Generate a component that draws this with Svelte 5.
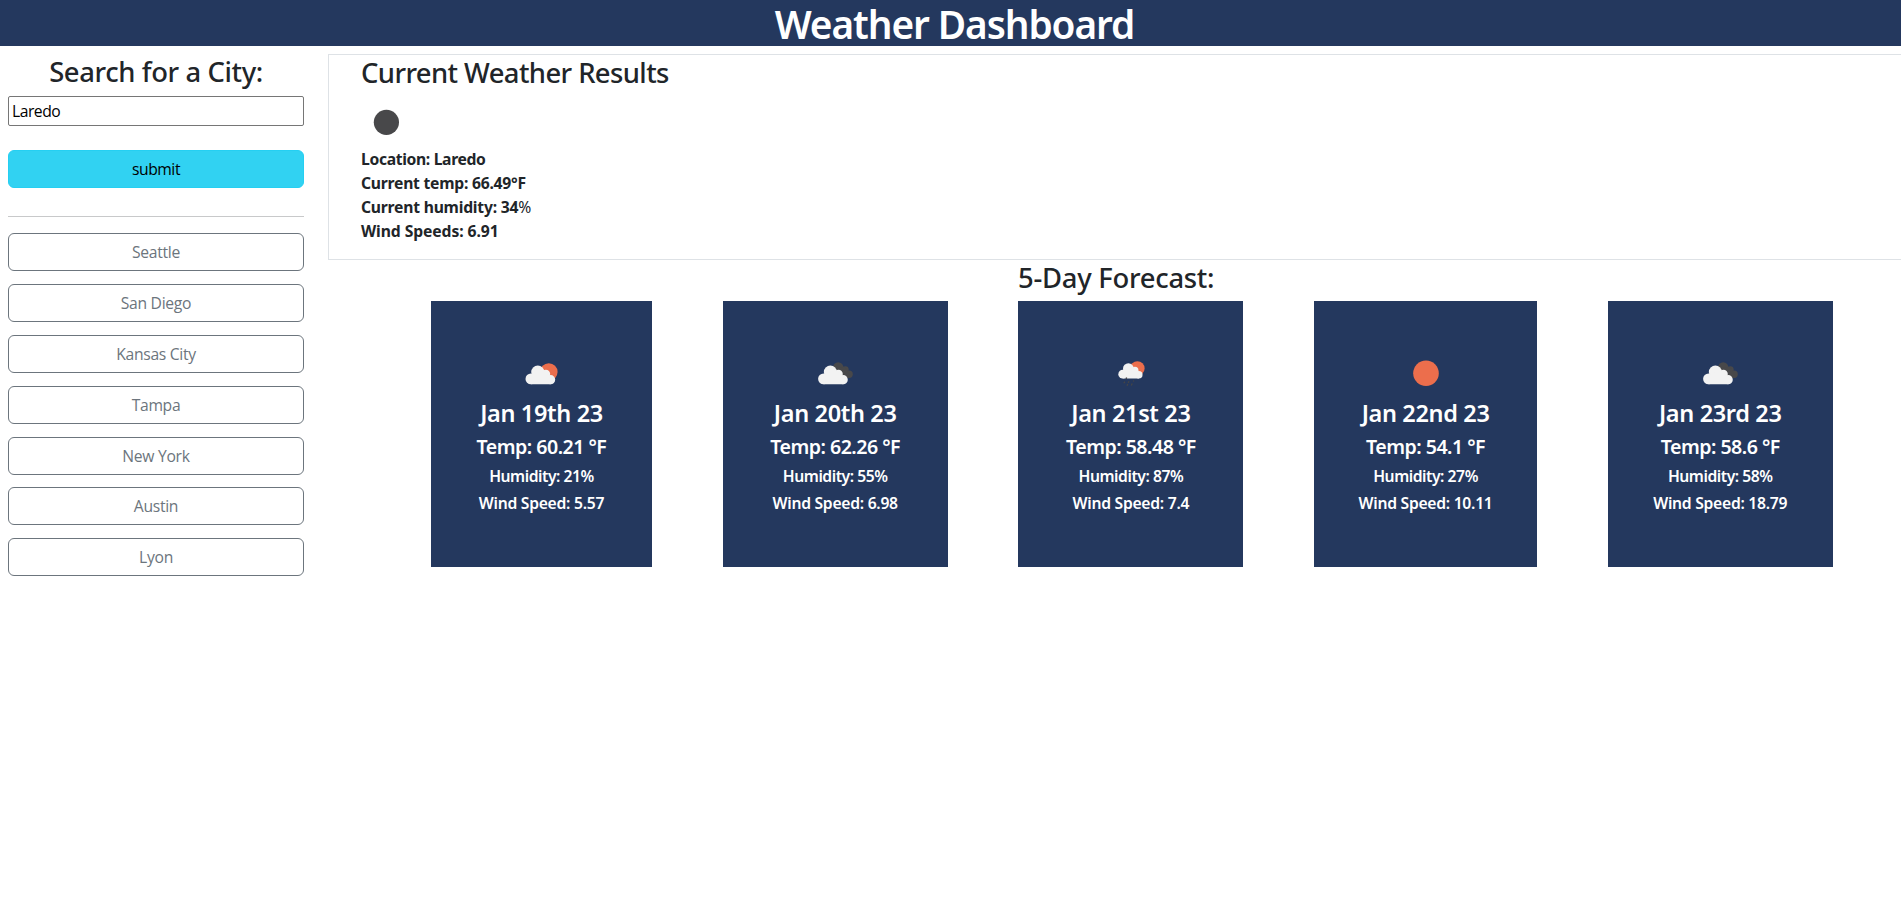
<script>
  let city = $state('Laredo');
  const history = ['Seattle', 'San Diego', 'Kansas City', 'Tampa', 'New York', 'Austin', 'Lyon'];
  const forecast = [
    { icon: 'partly', date: 'Jan 19th 23', temp: '60.21', humidity: 21, wind: '5.57' },
    { icon: 'clouds', date: 'Jan 20th 23', temp: '62.26', humidity: 55, wind: '6.98' },
    { icon: 'rain', date: 'Jan 21st 23', temp: '58.48', humidity: 87, wind: '7.4' },
    { icon: 'clear', date: 'Jan 22nd 23', temp: '54.1', humidity: 27, wind: '10.11' },
    { icon: 'clouds', date: 'Jan 23rd 23', temp: '58.6', humidity: 58, wind: '18.79' }
  ];
</script>

{#snippet cloud()}
  <g fill="#f2f2f2">
    <circle cx="13.9" cy="30.9" r="5.4" />
    <circle cx="20.8" cy="24.1" r="6.6" />
    <circle cx="28.9" cy="26.1" r="4.3" />
    <circle cx="33.6" cy="31.7" r="4.6" />
    <path d="M13.9 36.3V27l7-3 8 2 4.9 3v7.3z" />
  </g>
{/snippet}

{#snippet weather(kind)}
  <svg class="icon" viewBox="0 0 50 50" aria-hidden="true">
    {#if kind === 'night'}
      <circle cx="25.4" cy="25.3" r="12.6" fill="#48484a" />
    {:else if kind === 'clear'}
      <circle cx="25" cy="25.3" r="12.8" fill="#ec6e4c" />
    {:else if kind === 'partly'}
      <circle cx="31.8" cy="24" r="8.8" fill="#ec6e4c" />
      {@render cloud()}
    {:else if kind === 'clouds'}
      <g fill="#48484a">
        <circle cx="28.2" cy="19.4" r="5.2" />
        <circle cx="35.3" cy="21.7" r="3.4" />
        <circle cx="39.1" cy="26.3" r="3.7" />
        <path d="M26 20l9.3-1 3.8 7.3-1 3.6-6 .4z" />
      </g>
      <g transform="translate(-.4 0)">{@render cloud()}</g>
    {:else}
      <circle cx="31.4" cy="20.4" r="7.2" fill="#ec6e4c" />
      <g transform="translate(5.4 1) scale(.815)">{@render cloud()}</g>
      <path stroke="#454547" stroke-width="1.3" fill="none" d="M20.6 29.5l-.5 1.5M18.8 33.6l-.9 1.7M23 33.2l-.8 1.7M27.8 32.4l-.5 1.2M21.8 36l-.8 1.7M26.2 35.4l-.9 2" />
    {/if}
  </svg>
{/snippet}

<header><h1>Weather Dashboard</h1></header>
<div class="layout">
  <aside>
    <h2 class="search">Search for a City:</h2>
    <input type="text" bind:value={city} />
    <button class="submit">submit</button>
    <hr />
    <div class="history">
      {#each history as name}<button class="past">{name}</button>{/each}
    </div>
  </aside>
  <main>
    <section class="current">
      <h2 class="results">Current Weather Results</h2>
      {@render weather('night')}
      <p class="loc">Location: Laredo</p>
      <p>Current temp: 66.49°F</p>
      <p class="hum">Current humidity: 34<span>%</span></p>
      <p class="ws">Wind Speeds: 6.91</p>
    </section>
    <section class="forecast">
      <h2 class="five">5-Day Forecast:</h2>
      <div class="cards">
        {#each forecast as day}
          <article>
            {@render weather(day.icon)}
            <h4>{day.date}</h4>
            <h5>Temp: {day.temp} °F</h5>
            <h6>Humidity: {day.humidity}%</h6>
            <h6 class="wind">Wind Speed: {day.wind}</h6>
          </article>
        {/each}
      </div>
    </section>
  </main>
</div>

<style>
  :global(body) { margin: 0; background: #fff; overflow: hidden; }
  :global(*) { box-sizing: border-box; }
  h1, h2, h4, h5, h6, p { margin: 0; white-space: nowrap; }
  h1, h2, h4, h5, h6 { font-family: "Noto Sans", sans-serif; font-weight: 600; }
  header { height: 46px; padding-left: 8px; background: #24385e; color: #fff; text-align: center; }
  h1 { font-size: 38.8px; line-height: 48px; letter-spacing: -1.08px; }
  .layout { display: flex; color: #212529; font-family: "Open Sans", sans-serif; font-size: 15.7px; }
  aside { width: 312px; flex: none; padding: 8px; display: flex; flex-direction: column; }
  h2 { font-size: 27.4px; line-height: 36px; font-weight: 500; }
  .search { text-align: center; letter-spacing: -.38px; height: 34px; margin-bottom: 8px; }
  input { height: 30px; border: 1px solid #767676; border-radius: 2px; padding: 1px 3px; font: inherit; letter-spacing: -.5px; color: #000; background: #fff; outline: 0; }
  button { height: 38px; width: 100%; flex: none; padding: 0; border-radius: 6px; font: inherit; line-height: 36px; letter-spacing: -.3px; }
  .submit { margin-top: 24px; background: #31d2f2; border: 1px solid #25cff2; color: #000; letter-spacing: -.45px; }
  hr { width: 100%; height: 1px; flex: none; border: 0; margin: 28px 0 16.4px; background: #c8c9ca; }
  .history { display: flex; flex-direction: column; gap: 12.8px; }
  .past { background: #fff; border: 1px solid #6c757d; color: #6c757d; }
  main { flex: 1; min-width: 0; padding: 8px 0 0 16px; }
  .current { height: 206px; border: 1px solid #dee2e6; border-right: 0; padding-left: 32px; font-family: "Noto Sans", sans-serif; font-weight: 700; }
  .results { letter-spacing: -.58px; height: 41.5px; }
  .icon { display: block; width: 50px; height: 50px; flex: none; }
  p { line-height: 24px; letter-spacing: -.24px; }
  .loc { letter-spacing: -.34px; }
  .hum { letter-spacing: -.22px; }
  .hum span { font-weight: 400; }
  .ws { letter-spacing: -.08px; }
  .five { margin-left: 690px; letter-spacing: -.25px; height: 41px; }
  .cards { display: grid; grid-template-columns: 221px 225px 225px 223px 225px; column-gap: 70.7px; margin-left: 103px; }
  article { height: 266px; background: #24385e; color: #fff; padding-top: 47px; display: flex; flex-direction: column; align-items: center; }
  h4 { font-size: 23.5px; line-height: 31px; margin-bottom: 6px; letter-spacing: -.35px; }
  h5 { font-size: 19.6px; line-height: 24px; margin-bottom: 7px; letter-spacing: -.52px; }
  h6 { font-size: 15.7px; line-height: 20px; margin-bottom: 7px; letter-spacing: -.46px; }
  .wind { letter-spacing: -.27px; }
</style>
